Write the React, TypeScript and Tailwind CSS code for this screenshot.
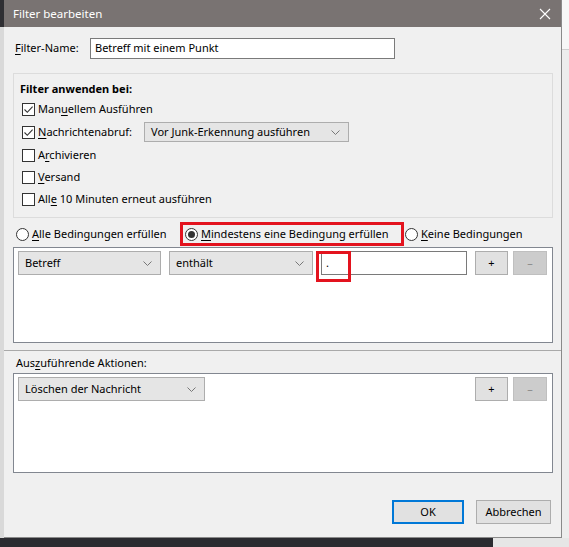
import type { ReactNode } from 'react';

// Mnemonic letter, underlined like a Windows access key
const K = ({ children }: { children: ReactNode }) => (
    <span className="underline underline-offset-[2px] decoration-[1px]">{children}</span>
);

const Chevron = () => (
    <svg width="9" height="5" viewBox="0 0 9 5" className="shrink-0">
        <path d="M0.5 0.5 L4.5 4.5 L8.5 0.5" stroke="#777" strokeWidth="1" fill="none" />
    </svg>
);

const Check = ({ checked }: { checked?: boolean }) => (
    <span className="w-[13px] h-[13px] border border-[#333] bg-white flex items-center justify-center shrink-0">
        {checked && (
            <svg width="11" height="11" viewBox="0 0 11 11">
                <path d="M1.5 5.5 L4.3 8.3 L9.6 2.6" stroke="#333" strokeWidth="1.1" fill="none" />
            </svg>
        )}
    </span>
);

const Radio = ({ selected }: { selected?: boolean }) => (
    <span className="w-[13px] h-[13px] rounded-full border border-[#333] bg-white flex items-center justify-center shrink-0">
        {selected && <span className="w-[7px] h-[7px] rounded-full bg-[#333]" />}
    </span>
);

const Select = ({ label, className }: { label: string; className: string }) => (
    <div className={`bg-[#e5e5e5] border border-[#adadad] flex items-center justify-between pl-[6px] pr-[8px] ${className}`}>
        <span>{label}</span>
        <Chevron />
    </div>
);

const SmallButton = ({ label, disabled }: { label: string; disabled?: boolean }) => (
    <div
        className={`h-[24px] flex items-center justify-center border ${
            disabled ? 'w-[34px] bg-[#cccccc] border-[#bfbfbf] text-[#8a8a8a]' : 'w-[33px] bg-[#e1e1e1] border-[#adadad]'
        }`}
    >
        {label}
    </div>
);

const checkRows: { checked: boolean; label: ReactNode; h: string; extra?: boolean }[] = [
    { checked: true, label: <>Man<K>u</K>ellem Ausführen</>, h: 'h-[22px]' },
    { checked: true, label: <><K>N</K>achrichtenabruf:</>, h: 'h-[24px]', extra: true },
    { checked: false, label: <>A<K>r</K>chivieren</>, h: 'h-[22px]' },
    { checked: false, label: <><K>V</K>ersand</>, h: 'h-[22px]' },
    { checked: false, label: <>All<K>e</K> 10 Minuten erneut ausführen</>, h: 'h-[22px]' },
];

export default function App() {
    return (
        <div className="w-[569px] h-[547px] overflow-hidden flex flex-col bg-[#e9e9e9] text-[11px] text-black font-['Segoe_UI','Noto_Sans',sans-serif]">
            <div className="flex h-[538px]">
                {/* window behind, left edge */}
                <div className="w-[4px] flex flex-col">
                    <div className="h-[27px] bg-[#2f2f33]" />
                    <div className="flex-1 bg-[#d9d9d9]" />
                </div>

                {/* dialog */}
                <div className="w-[558px] flex flex-col bg-[#f0f0f0] border-r border-b border-[#8a8a8a]">
                    <div className="h-[27px] bg-[#797372] flex items-center justify-between pl-[9px] pr-[10px] text-white text-[11.5px]">
                        <span>Filter bearbeiten</span>
                        <svg width="12" height="12" viewBox="0 0 12 12">
                            <path d="M1 1 L11 11 M11 1 L1 11" stroke="white" strokeWidth="1.1" />
                        </svg>
                    </div>

                    <div className="flex items-center mt-[11px] pl-[11px]">
                        <span className="w-[75px]"><K>F</K>ilter-Name:</span>
                        <div className="w-[305px] h-[21px] bg-white border border-[#7a7a7a] flex items-center pl-[4px]">
                            Betreff mit einem Punkt
                        </div>
                    </div>

                    <div className="ml-[9px] mt-[14px] w-[540px] h-[145px] border border-[#dcdcdc] flex flex-col">
                        <div className="pl-[6px] pt-[7px] h-[24px] font-bold">Filter anwenden bei:</div>
                        {checkRows.map((row, i) => (
                            <div key={i} className={`flex items-center pl-[8px] gap-[3px] ${row.h}`}>
                                <Check checked={row.checked} />
                                <span className={row.extra ? 'w-[103px]' : ''}>{row.label}</span>
                                {row.extra && <Select label="Vor Junk-Erkennung ausführen" className="w-[205px] h-[20px]" />}
                            </div>
                        ))}
                    </div>

                    <div className="h-[29px] flex items-center pl-[12px] pt-[3px]">
                        <div className="w-[164px] flex items-center gap-[3px]">
                            <Radio />
                            <span><K>A</K>lle Bedingungen erfüllen</span>
                        </div>
                        <div className="w-[224px] h-[24px] border-[3px] border-[#e3131e] flex items-center gap-[3px] pl-[2px]">
                            <Radio selected />
                            <span><K>M</K>indestens eine Bedingung erfüllen</span>
                        </div>
                        <div className="flex items-center gap-[3px] ml-[1px]">
                            <Radio />
                            <span><K>K</K>eine Bedingungen</span>
                        </div>
                    </div>

                    <div className="ml-[9px] w-[540px] h-[96px] bg-white border border-[#828790] pt-[3px] pl-[4px]">
                        <div className="flex items-center">
                            <Select label="Betreff" className="w-[143px] h-[24px]" />
                            <Select label="enthält" className="w-[144px] h-[24px] ml-[8px]" />
                            <div className="relative w-[146px] h-[24px] ml-[8px] border border-[#7a7a7a] flex items-center pl-[4px]">
                                .
                                <div className="absolute left-[-6px] top-[-1px] w-[35px] h-[31px] border-[3px] border-[#e3131e]" />
                            </div>
                            <div className="ml-[8px]"><SmallButton label="+" /></div>
                            <div className="ml-[5px]"><SmallButton label="–" disabled /></div>
                        </div>
                    </div>

                    <div className="mt-[7px] border-t border-[#a9a9a9]" />

                    <div className="mt-[4px] pl-[12px] h-[16px] flex items-center">
                        Aus<K>z</K>uführende Aktionen:
                    </div>

                    <div className="ml-[9px] mt-[2px] w-[540px] h-[100px] bg-white border border-[#828790] pt-[3px] pl-[4px] pr-[5px]">
                        <div className="flex items-center">
                            <Select label="Löschen der Nachricht" className="w-[187px] h-[24px]" />
                            <div className="ml-auto"><SmallButton label="+" /></div>
                            <div className="ml-[5px]"><SmallButton label="–" disabled /></div>
                        </div>
                    </div>

                    <div className="mt-[27px] flex justify-end pr-[10px] gap-[12px]">
                        <div className="w-[72px] h-[24px] bg-[#e1e1e1] border-2 border-[#0078d7] flex items-center justify-center">
                            OK
                        </div>
                        <div className="w-[75px] h-[24px] bg-[#e1e1e1] border border-[#adadad] flex items-center justify-center">
                            Abbrechen
                        </div>
                    </div>
                </div>

                {/* window behind, right edge */}
                <div className="flex-1 flex flex-col">
                    <div className="h-[50px] bg-[#f7f7f7] border-b border-[#cfcfcf]" />
                    <div className="flex-1 bg-[#ededed]" />
                </div>
            </div>

            {/* taskbar strip below the dialog */}
            <div className="flex flex-1">
                <div className="w-[493px] bg-[#2b2b30]" />
                <div className="flex-1 bg-[#e6e6e6]" />
            </div>
        </div>
    );
}
